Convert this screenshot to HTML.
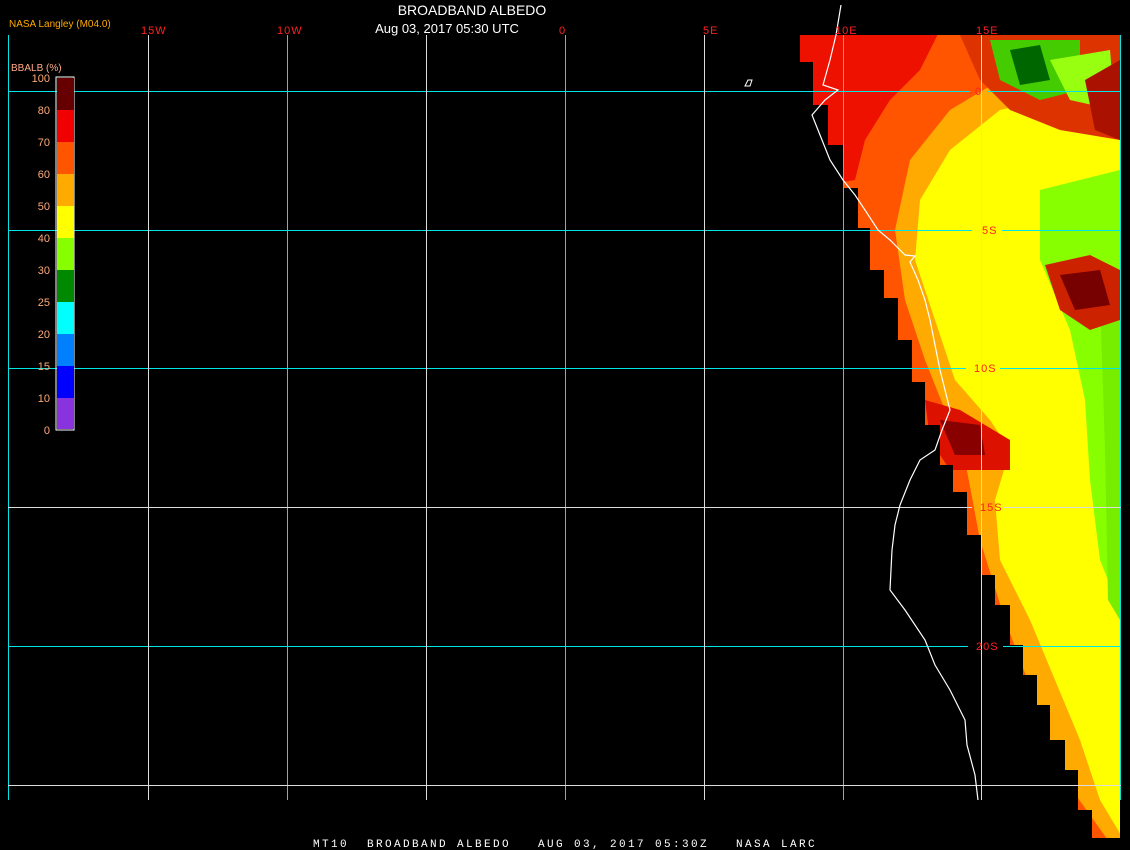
<!DOCTYPE html>
<html><head><style>
html,body{margin:0;padding:0;background:#000;width:1130px;height:850px;overflow:hidden}
svg{display:block}
text{font-family:"Liberation Sans",sans-serif}
</style></head><body>
<svg width="1130" height="850" xmlns="http://www.w3.org/2000/svg">
<rect width="1130" height="850" fill="#000"/>
<defs><clipPath id="d"><polygon points="800,35 1120,35 1120,838 1092,838 1092,810 1078,810 1078,770 1065,770 1065,740 1050,740 1050,705 1037,705 1037,675 1023,675 1023,645 1010,645 1010,605 995,605 995,575 982,575 982,535 967,535 967,492 953,492 953,465 940,465 940,425 925,425 925,382 912,382 912,340 898,340 898,298 884,298 884,270 870,270 870,228 858,228 858,188 843,188 843,145 828,145 828,105 813,105 813,62 800,62"/></clipPath></defs>
<g clip-path="url(#d)">
<rect x="790" y="30" width="340" height="820" fill="#ffff00"/>
<polygon points="790,30 1130,30 1130,80 1000,110 950,150 920,200 915,260 935,320 955,380 990,420 1010,450 995,500 1000,560 1030,620 1055,680 1080,740 1100,800 1130,850 790,850" fill="#ffaa00"/>
<polygon points="790,30 1130,30 1130,60 1000,80 950,110 910,160 895,230 905,300 925,360 945,410 965,460 980,540 1005,620 1035,700 1065,780 1115,850 790,850" fill="#ff5500"/>
<polygon points="790,30 940,30 920,70 890,100 865,140 855,180 790,190" fill="#ee1100"/>
<polygon points="925,400 960,410 1010,440 1010,470 980,470 950,470 930,440" fill="#dd1100"/>
<polygon points="940,420 980,425 985,455 955,455" fill="#880000"/>
<polygon points="1040,190 1120,170 1120,610 1100,560 1090,480 1085,400 1070,330 1040,260" fill="#88ff00"/>
<polygon points="1100,300 1120,300 1120,620 1108,600 1105,450" fill="#77ee00"/>
<polygon points="1045,265 1090,255 1120,270 1120,320 1090,330 1060,310" fill="#cc2200"/>
<polygon points="1060,275 1100,270 1110,305 1075,310" fill="#770000"/>
<polygon points="960,35 1120,35 1120,140 1060,130 1010,110 980,80" fill="#dd3300"/>
<polygon points="990,40 1080,40 1080,90 1040,100 1000,80" fill="#44cc00"/>
<polygon points="1010,50 1040,45 1050,80 1020,85" fill="#006600"/>
<polygon points="1050,60 1110,50 1115,110 1070,100" fill="#99ff11"/>
<polygon points="1085,80 1120,60 1120,140 1095,130" fill="#aa1100"/>
</g>
<g stroke-width="1">
<g stroke="#00e5e5">
<line x1="8.5" y1="35" x2="8.5" y2="800"/><line x1="287.5" y1="35" x2="287.5" y2="800"/><line x1="565.5" y1="35" x2="565.5" y2="800"/><line x1="843.5" y1="35" x2="843.5" y2="800"/><line x1="1120.5" y1="35" x2="1120.5" y2="800"/>
<line x1="8" y1="91.5" x2="970" y2="91.5"/><line x1="988" y1="91.5" x2="1121" y2="91.5"/>
<line x1="8" y1="230.5" x2="972" y2="230.5"/><line x1="1002" y1="230.5" x2="1121" y2="230.5"/>
<line x1="8" y1="368.5" x2="966" y2="368.5"/><line x1="1000" y1="368.5" x2="1121" y2="368.5"/>
<line x1="8" y1="646.5" x2="968" y2="646.5"/><line x1="1003" y1="646.5" x2="1121" y2="646.5"/>
</g>
<g stroke="#dcdcdc">
<line x1="148.5" y1="35" x2="148.5" y2="800"/><line x1="426.5" y1="35" x2="426.5" y2="800"/><line x1="704.5" y1="35" x2="704.5" y2="800"/><line x1="981.5" y1="35" x2="981.5" y2="800"/>
<line x1="8" y1="507.5" x2="972" y2="507.5"/><line x1="1004" y1="507.5" x2="1121" y2="507.5"/><line x1="8" y1="785.5" x2="1121" y2="785.5"/>
</g>
</g>
<polyline fill="none" stroke="#fff" stroke-width="1.2" points="841,5 836,35 830,60 823,85 838,90 825,100 812,115 820,135 830,160 843,180 855,195 865,210 878,230 890,240 905,255 915,256 910,262 918,280 925,300 930,320 935,345 940,370 945,390 950,410 942,430 935,450 920,460 910,480 900,505 895,525 892,550 890,590 905,610 925,640 935,665 950,690 965,720 967,745 975,775 978,800"/>
<path d="M745,86 l3,-6 4,0 -2,6 z" fill="none" stroke="#fff"/>
<g fill="#ff2020" font-size="11" letter-spacing="1">
<text x="141" y="34">15W</text><text x="277" y="34">10W</text><text x="559" y="34">0</text><text x="703" y="34">5E</text><text x="835" y="34">10E</text><text x="976" y="34">15E</text>
<text x="975" y="95">0</text><text x="982" y="234">5S</text><text x="974" y="372">10S</text><text x="980" y="511">15S</text><text x="976" y="650">20S</text>
</g>
<text x="472" y="15" fill="#fff" font-size="14" text-anchor="middle">BROADBAND ALBEDO</text>
<text x="447" y="33" fill="#fff" font-size="13" text-anchor="middle">Aug 03, 2017 05:30 UTC</text>
<text x="9" y="27" fill="#ffaa00" font-size="10">NASA Langley (M04.0)</text>
<text x="11" y="71" fill="#ffaa88" font-size="10">BBALB (%)</text>
<rect x="56" y="77" width="18" height="353" fill="none" stroke="#fff"/>
<g>
<rect x="57" y="78" width="17" height="32" fill="#660000"/>
<rect x="57" y="110" width="17" height="32" fill="#f00000"/>
<rect x="57" y="142" width="17" height="32" fill="#ff5500"/>
<rect x="57" y="174" width="17" height="32" fill="#ffaa00"/>
<rect x="57" y="206" width="17" height="32" fill="#ffff00"/>
<rect x="57" y="238" width="17" height="32" fill="#88ff00"/>
<rect x="57" y="270" width="17" height="32" fill="#008800"/>
<rect x="57" y="302" width="17" height="32" fill="#00ffff"/>
<rect x="57" y="334" width="17" height="32" fill="#0080ff"/>
<rect x="57" y="366" width="17" height="32" fill="#0000ff"/>
<rect x="57" y="398" width="17" height="31" fill="#8833dd"/>
</g>
<g fill="#ffaa77" font-size="11" text-anchor="end">
<text x="50" y="82">100</text><text x="50" y="114">80</text><text x="50" y="146">70</text><text x="50" y="178">60</text><text x="50" y="210">50</text><text x="50" y="242">40</text><text x="50" y="274">30</text><text x="50" y="306">25</text><text x="50" y="338">20</text><text x="50" y="370">15</text><text x="50" y="402">10</text><text x="50" y="434">0</text>
</g>
<text x="313" y="847" fill="#fff" font-size="11" style="font-family:'Liberation Mono',monospace" letter-spacing="2.4" xml:space="preserve">MT10  BROADBAND ALBEDO   AUG 03, 2017 05:30Z   NASA LARC</text>
</svg>
</body></html>
